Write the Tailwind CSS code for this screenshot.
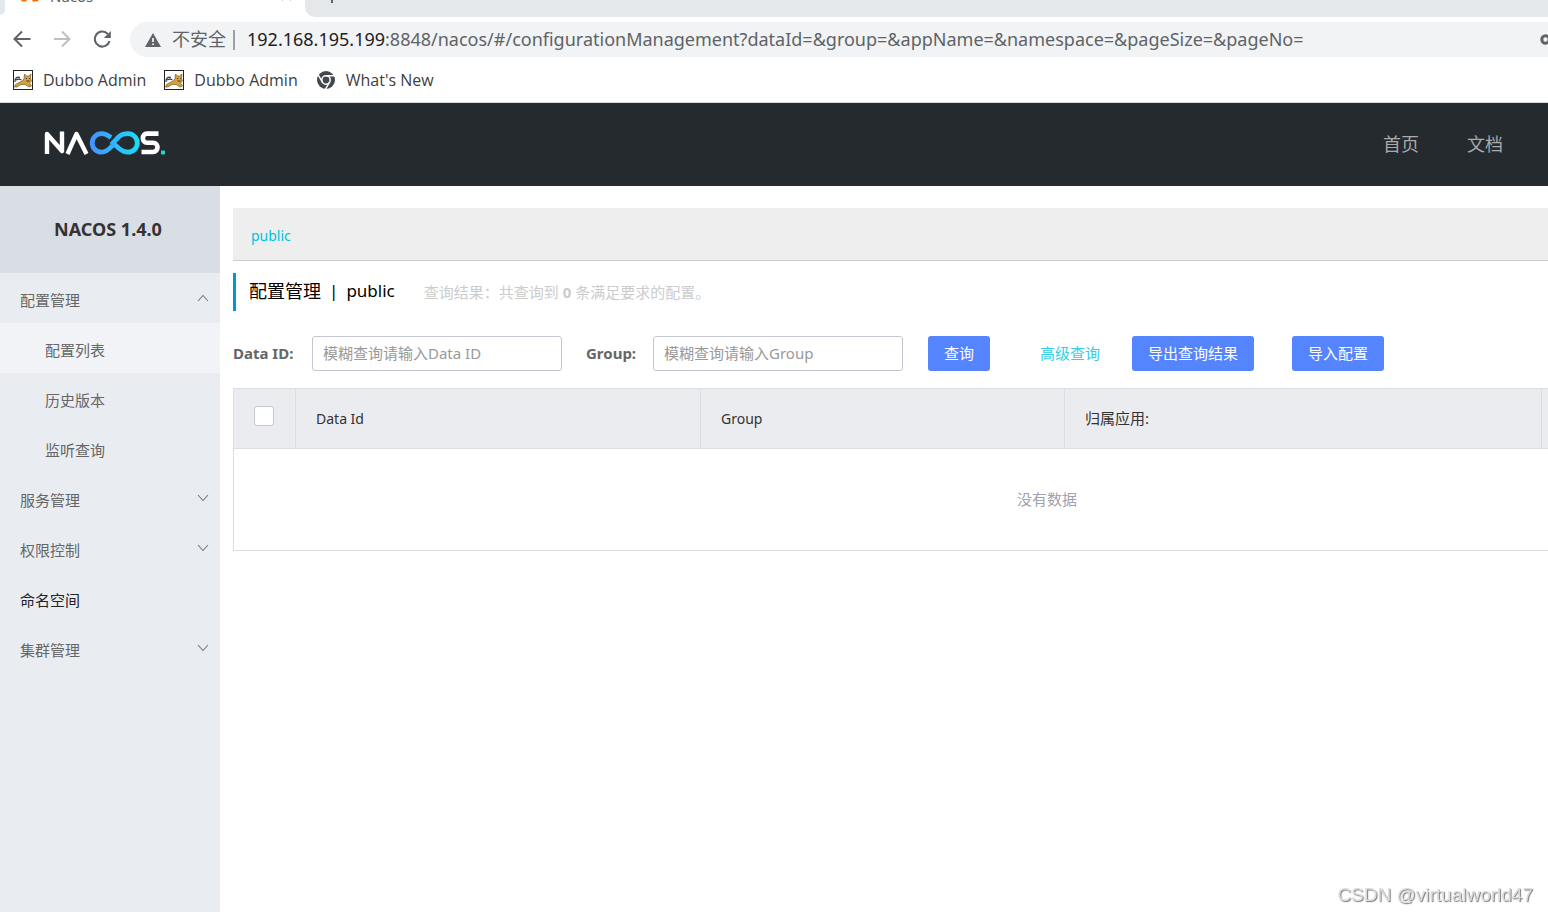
<!DOCTYPE html>
<html lang="zh-CN">
<head>
<meta charset="utf-8">
<meta name="viewport" content="width=device-width, initial-scale=1">
<title>Nacos</title>
<script src="https://cdn.jsdelivr.net/npm/@tailwindcss/browser@4"></script>
</head>
<body class="bg-white font-['Noto_Sans','Noto_Sans_CJK_SC',sans-serif] text-[15px] text-[#666]">
<svg class="hidden" aria-hidden="true">
  <defs>
    <symbol id="tomcat" viewBox="0 0 20 20">
      <rect x="0.5" y="0.5" width="19" height="19" fill="#fff" stroke="#222"/>
      <path d="M2.500 14.500L6 12.500L9.500 11L11 8.500L11.500 4L13.500 6H15.500L18 4L17.500 8L18.500 11L16.500 13L18.500 16L16 17L12 14.500L8 14.500L4 17H1.500Z" fill="#d9a13c" stroke="#5d4a25" stroke-width="0.6"/>
      <path d="M2 12C1.500 8.500 4 6.500 7 7.500M3 10L6 9L8.500 10" fill="none" stroke="#333" stroke-width="1.200"/>
      <path d="M13 8.500H14M16 8.500H16.800M13.500 11H16.500" fill="none" stroke="#333" stroke-width="1"/>
    </symbol>
    <symbol id="down" viewBox="0 0 12 8"><path d="M1 1L6 6.500L11 1" fill="none" stroke="#777" stroke-width="1.100"/></symbol>
  </defs>
</svg>
<div class="flex min-h-screen flex-col overflow-hidden">
  <div class="flex h-[17px] shrink-0 overflow-hidden bg-[#e5e8eb]">
    <div class="w-[5px] shrink-0 bg-white"><div class="h-[15px] rounded-br-[8px] bg-[#e5e8eb]"></div></div>
    <div class="flex w-[300px] shrink-0 items-start justify-between bg-white pl-[15px] pr-3">
      <div class="flex">
        <svg class="h-[2px] w-5" viewBox="0 0 20 2"><path d="M1 0H7L6 1.500H2ZM12 0H19L17 1.500H13Z" fill="#ff6a00"/></svg>
        <span class="-mt-[14px] pl-2.5 text-[15px] leading-5 text-[#5f6368]">Nacos</span>
      </div>
      <svg class="h-[2px] w-3" viewBox="0 0 12 2"><path d="M1 0H2M9 0H10" stroke="#aaa"/></svg>
    </div>
    <div class="flex grow bg-white"><div class="grow rounded-bl-[10px] bg-[#e5e8eb] pl-[26px]"><div class="h-[3px] w-[2px] bg-[#5f6368]"></div></div></div>
  </div>
  <div class="flex shrink-0 items-center pl-3 pt-[5px]">
    <button aria-label="后退" class="mr-5 size-5"><svg viewBox="0 0 20 20" fill="none" stroke="#5f6368" stroke-width="2"><path d="M18.500 9H3M10 1.500L2.500 9L10 16.500"/></svg></button>
    <button aria-label="前进" class="mr-5 size-5"><svg viewBox="0 0 20 20" fill="none" stroke="#bdc0c3" stroke-width="2"><path d="M2 9H17M10 1.500L17.500 9L10 16.500"/></svg></button>
    <button aria-label="重新加载" class="mr-[18px] size-5"><svg viewBox="0 0 20 20"><path d="M17.500 11A7.500 7.500 0 1 1 15.800 4" fill="none" stroke="#5f6368" stroke-width="2.100"/><path d="M18.800 1V8H11.800Z" fill="#5f6368"/></svg></button>
    <div class="flex h-[35px] grow items-center rounded-l-full bg-[#f1f3f4] pl-[15px]">
      <svg class="h-[14px] w-4 shrink-0" viewBox="0 0 16 14"><path d="M8 0L16 14H0Z" fill="#5f6368"/><path d="M8 5V9M8 10.500V12" stroke="#fff" stroke-width="1.600"/></svg>
      <span class="ml-[11px] shrink-0 text-[18px] text-[#5f6368]">不安全</span>
      <span class="ml-[7px] h-5 w-[2px] shrink-0 bg-[#9aa0a6]"></span>
      <span class="ml-3 grow whitespace-nowrap text-[18px] text-[#5f6368]"><span class="text-[#202124]">192.168.195.199</span>:8848/nacos/#/configurationManagement?dataId=&amp;group=&amp;appName=&amp;namespace=&amp;pageSize=&amp;pageNo=</span>
      <svg class="h-[11px] w-2 shrink-0" viewBox="0 0 8 11"><circle cx="5.500" cy="5.500" r="3.700" fill="none" stroke="#5f6368" stroke-width="3"/></svg>
    </div>
  </div>
  <div class="flex h-[46px] shrink-0 items-center border-b border-[#d5d8db] pl-[13px] font-['Open_Sans',sans-serif] text-[16px] text-[#3c4043]">
    <a href="#" class="mr-[18px] flex items-center gap-2.5"><svg class="size-5"><use href="#tomcat"/></svg>Dubbo Admin</a>
    <a href="#" class="mr-[18px] flex items-center gap-2.5"><svg class="size-5"><use href="#tomcat"/></svg>Dubbo Admin</a>
    <a href="#" class="flex items-center gap-2.5"><svg class="size-5" viewBox="0 0 20 20"><circle cx="10" cy="10" r="9" fill="#44474b"/><circle cx="10" cy="10" r="4.200" fill="#44474b" stroke="#fff" stroke-width="1.500"/><path d="M10 5.800H18.500M6.400 12.100L2.200 4.800M13.600 12.100L9.400 19.400" stroke="#fff" stroke-width="1.400"/></svg>What's New</a>
  </div>

  <header class="flex h-[83px] shrink-0 items-center justify-between bg-[#252a2f] pl-11 pr-[45px]">
    <a href="#" aria-label="NACOS" class="pb-1"><svg class="block h-6 w-[122px]" viewBox="0 0 122 24" fill="none">
      <defs><linearGradient id="g" gradientUnits="userSpaceOnUse" x1="46" y1="0" x2="95" y2="0"><stop stop-color="#4492ff"/><stop offset="1" stop-color="#18dcfa"/></linearGradient></defs>
      <path d="M3 23V3L18 20V0.500M23.500 23L32.500 3L42.500 23" stroke="#fff" stroke-width="4.400" stroke-linejoin="round"/>
      <path d="M67 6.500C63 3.500 61 2.600 57.500 2.600A9.300 9.300 0 0 0 57.500 21.200C61.500 21.200 64.500 19 68.500 14.500" stroke="url(#g)" stroke-width="4.800"/>
      <path d="M69 11.900L75 5.500C78 3 80.500 2.600 84 2.600A9.300 9.300 0 0 1 84 21.200C80.500 21.200 78 20 75 17.500Z" stroke="url(#g)" stroke-width="4.800"/>
      <path d="M114.500 2.600H103C97.500 2.600 97.500 11.700 103 11.700H109C115 11.700 115 21 109 21H97.500" stroke="#fff" stroke-width="4.600"/>
      <rect x="117" y="19.500" width="4" height="4" rx="1" fill="#18dcd2"/>
    </svg></a>
    <nav class="flex gap-12 text-[18px] text-[#a8aaac]"><a href="#">首页</a><a href="#">文档</a></nav>
  </header>

  <div class="flex grow">
    <aside class="w-[220px] shrink-0 bg-[#e9edf1]">
      <h1 class="flex h-[87px] items-center justify-center bg-[#d9dde4] pr-1 text-[18px] font-bold text-[#333]">NACOS 1.4.0</h1>
      <nav>
        <button class="flex h-[50px] w-full items-center justify-between pl-5 pr-[11px] pt-1">配置管理<svg class="mb-1 h-2 w-3 rotate-180"><use href="#down"/></svg></button>
        <a href="#" class="flex h-[50px] items-center bg-[#f1f3f7] pl-[45px] pt-1">配置列表</a>
        <a href="#" class="flex h-[50px] items-center pl-[45px] pt-1">历史版本</a>
        <a href="#" class="flex h-[50px] items-center pl-[45px] pt-1">监听查询</a>
        <button class="flex h-[50px] w-full items-center justify-between pl-5 pr-[11px] pt-1">服务管理<svg class="mb-1 h-2 w-3"><use href="#down"/></svg></button>
        <button class="flex h-[50px] w-full items-center justify-between pl-5 pr-[11px] pt-1">权限控制<svg class="mb-1 h-2 w-3"><use href="#down"/></svg></button>
        <a href="#" class="flex h-[50px] items-center pl-5 pt-1 text-[#222]">命名空间</a>
        <button class="flex h-[50px] w-full items-center justify-between pl-5 pr-[11px] pt-1">集群管理<svg class="mb-1 h-2 w-3"><use href="#down"/></svg></button>
      </nav>
    </aside>
    <main class="min-w-0 grow overflow-hidden pl-[13px] pt-[22px]">
      <div class="flex h-[53px] items-center border-b border-[#ccc] bg-[#eee] pl-[18px] pt-[3px] text-[14px] text-[#00c1de]"><a href="#">public</a></div>
      <div class="mt-3 flex h-[38px] items-center border-l-[3px] border-[#09c] pl-[13px]">
        <h2 class="flex items-center gap-2 pb-0.5 text-[17px] text-black"><span class="text-[18px]">配置管理</span><span>|</span><span>public</span></h2>
        <span class="ml-[29px] text-[#ccc]">查询结果：共查询到 <b>0</b> 条满足要求的配置。</span>
      </div>
      <form class="mt-[25px] flex items-center whitespace-nowrap">
        <label for="did" class="w-[79px] font-bold">Data ID:</label>
        <input id="did" placeholder="模糊查询请输入Data ID" class="h-[35px] w-[250px] rounded-[3px] border border-[#c4c6cf] px-2.5 pb-0.5 placeholder:text-[#999]">
        <label for="grp" class="ml-6 w-[67px] font-bold">Group:</label>
        <input id="grp" placeholder="模糊查询请输入Group" class="h-[35px] w-[250px] rounded-[3px] border border-[#c4c6cf] px-2.5 pb-0.5 placeholder:text-[#999]">
        <button type="button" class="ml-[25px] h-[35px] rounded-[3px] bg-[#5584ff] px-4 text-white">查询</button>
        <a href="#" class="ml-[50px] text-[#33cde5]">高级查询</a>
        <button type="button" class="ml-8 h-[35px] rounded-[3px] bg-[#5584ff] px-4 text-white">导出查询结果</button>
        <button type="button" class="ml-[38px] h-[35px] rounded-[3px] bg-[#5584ff] px-4 text-white">导入配置</button>
      </form>
      <table class="mt-[17px] w-[1628px] table-fixed border-collapse border border-[#dcdee3]">
        <thead class="bg-[#ebecf0] text-left text-[#333]">
          <tr class="h-[60px]">
            <th class="w-[62px] border border-[#dcdee3] pl-5"><input type="checkbox" aria-label="全选" class="mb-1.5 block size-5 appearance-none rounded-[3px] border border-[#c4c6cf] bg-white"></th>
            <th class="w-[405px] border border-[#dcdee3] pl-5 text-[14px] font-normal">Data Id</th>
            <th class="w-[364px] border border-[#dcdee3] pl-5 text-[14px] font-normal">Group</th>
            <th class="w-[477px] border border-[#dcdee3] pl-5 font-normal">归属应用:</th>
            <td class="border border-[#dcdee3]"></td>
          </tr>
        </thead>
        <tbody><tr class="h-[102px]"><td colspan="5" class="text-center text-[#a0a2ad]">没有数据</td></tr></tbody>
      </table>
    </main>
  </div>
  <div class="fixed bottom-[5px] right-[15px] font-['Liberation_Sans',sans-serif] text-[19px] leading-6 text-[#ddd] [text-shadow:1px_1px_1px_#777]">CSDN @virtualworld47</div>
</div>
</body>
</html>
